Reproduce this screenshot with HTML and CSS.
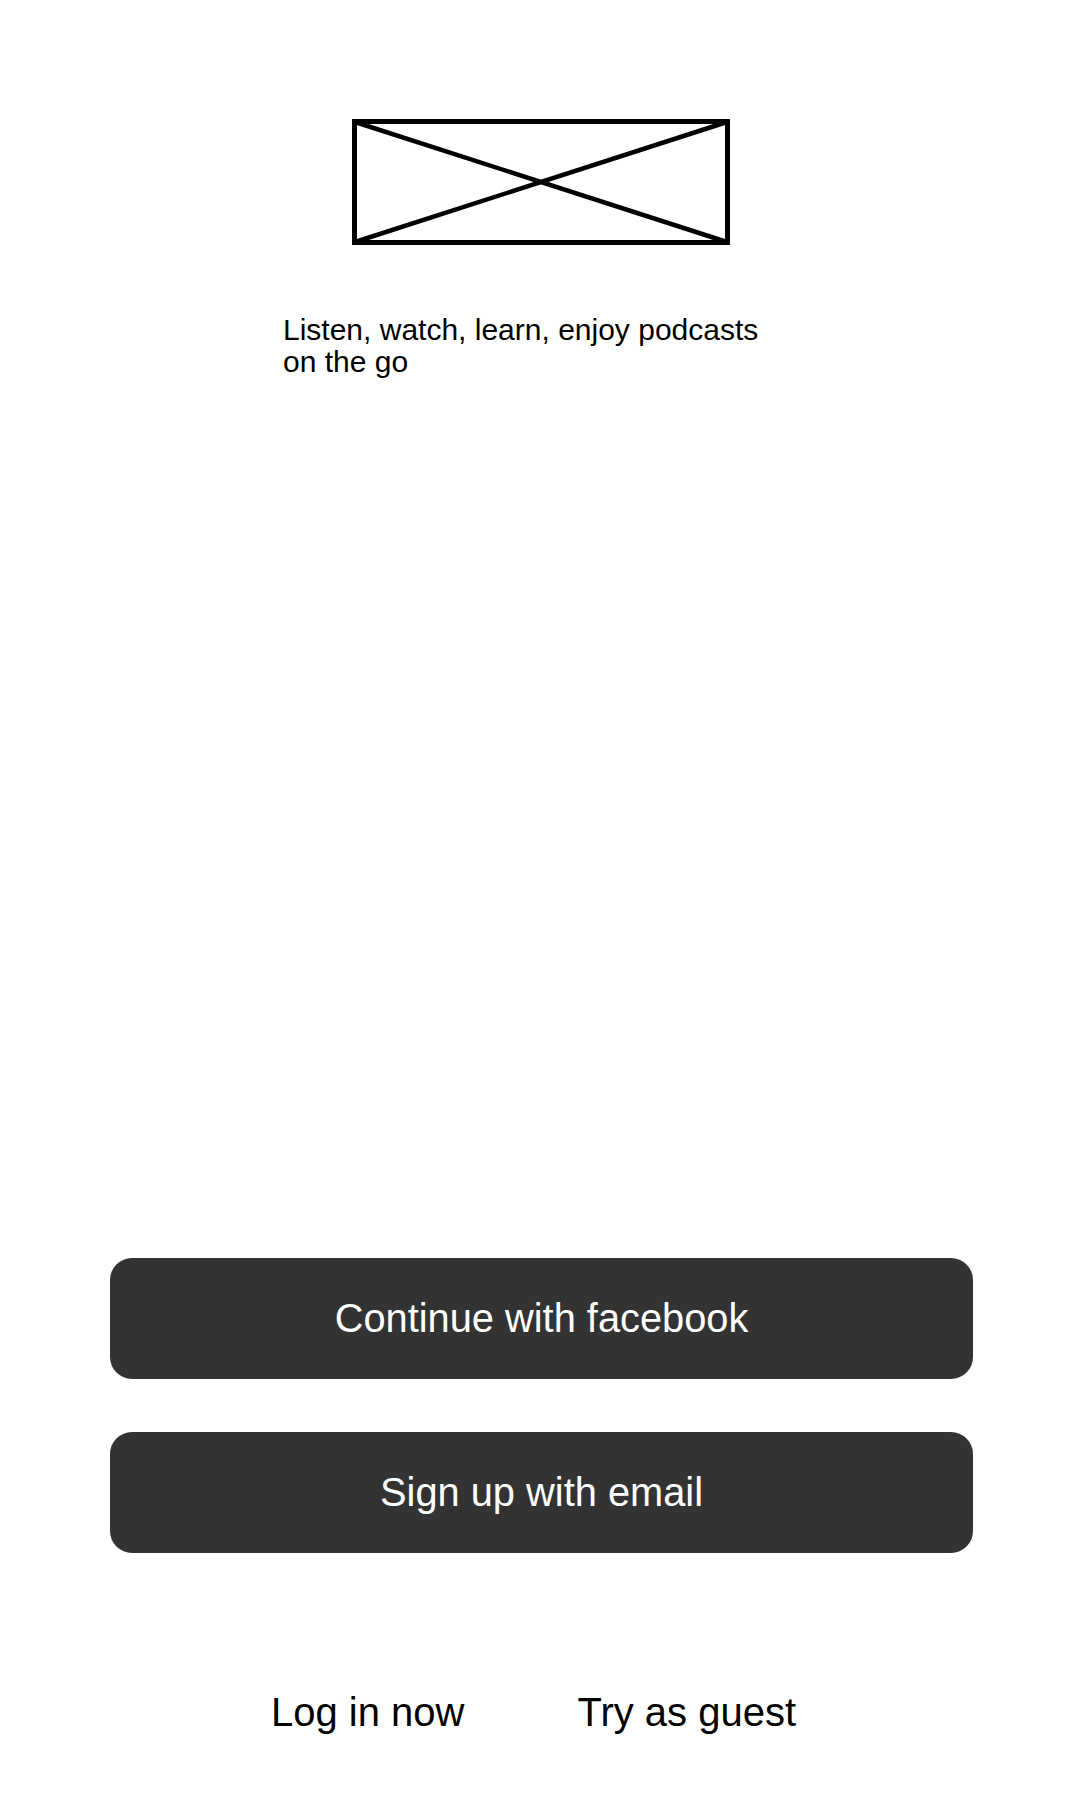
FILE: index.html
```html
<!DOCTYPE html>
<html lang="en">
<head>
<meta charset="utf-8">
<title>Podcasts</title>
<link rel="stylesheet" href="styles.css">
</head>
<body>
<div class="screen">
  <div class="logo">
    <svg width="378" height="126" viewBox="0 0 378 126" xmlns="http://www.w3.org/2000/svg">
      <rect x="2.5" y="2.5" width="373" height="121" fill="none" stroke="#000" stroke-width="5"/>
      <line x1="3" y1="3" x2="375" y2="123" stroke="#000" stroke-width="4.5"/>
      <line x1="375" y1="3" x2="3" y2="123" stroke="#000" stroke-width="4.5"/>
    </svg>
  </div>
  <p class="tagline">Listen, watch, learn, enjoy podcasts on the go</p>
  <div class="actions">
    <button class="btn">Continue with facebook</button>
    <button class="btn">Sign up with email</button>
  </div>
  <div class="links">
    <span class="link">Log in now</span>
    <span class="link">Try as guest</span>
  </div>
</div>
</body>
</html>
```

FILE: styles.css
```css
html, body {
  margin: 0;
  padding: 0;
  background: #ffffff;
}

body {
  font-family: "Liberation Sans", Arial, sans-serif;
  color: #000;
}

.screen {
  height: 1800px;
  box-sizing: border-box;
  padding-top: 119px;
  padding-bottom: 65px;
  display: flex;
  flex-direction: column;
}

.logo {
  display: flex;
  justify-content: center;
  padding-left: 1px;
}

.logo svg {
  display: block;
}

.tagline {
  width: 514px;
  margin: 69px auto 0;
  padding-left: 0;
  font-size: 30px;
  line-height: 32px;
}

.actions {
  margin-top: auto;
  margin-left: 110px;
  width: 863px;
  display: flex;
  flex-direction: column;
  gap: 53px;
}

.btn {
  height: 121px;
  border: none;
  border-radius: 22px;
  background: #333333;
  color: #ffffff;
  font-family: "Liberation Sans", Arial, sans-serif;
  font-size: 39.8px;
  padding: 0;
  cursor: pointer;
}

.links {
  margin-top: 136px;
  display: flex;
  padding-left: 271px;
  gap: 113px;
  font-size: 40px;
  line-height: 46px;
}
```
